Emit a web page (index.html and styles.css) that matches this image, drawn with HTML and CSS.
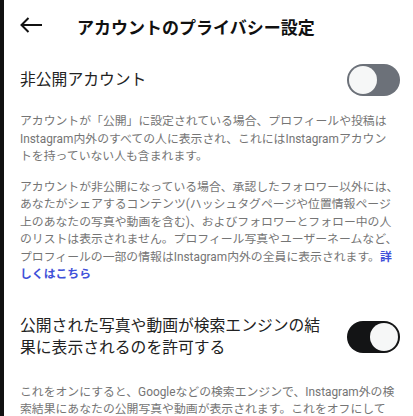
FILE: index.html
```html
<!DOCTYPE html>
<html>
  <head>
    <title>アカウントのプライバシー設定</title>
    <meta charset="utf-8">
    <link rel="stylesheet" href="styles.css">
  </head>
  <body>
    <div class="edge"></div>
    <div class="screen">
      <div class="top-bar">
        <svg class="back" width="22" height="16" viewBox="0 0 22 16">
          <path d="M8.5 1 L1.5 8 L8.5 15 M1.5 8 H22" fill="none" stroke="#111" stroke-width="2" />
        </svg>
        <h1 class="title">アカウントのプライバシー設定</h1>
      </div>

      <div class="setting-row">
        <span class="setting-label">非公開アカウント</span>
        <span class="switch"><span class="knob"></span></span>
      </div>
      <p class="note first">アカウントが「公開」に設定されている場合、プロフィールや投稿は<br>Instagram内外のすべての人に表示され、これにはInstagramアカウン<br>トを持っていない人も含まれます。</p>
      <p class="note">アカウントが非公開になっている場合、承認したフォロワー以外には、<br>あなたがシェアするコンテンツ(ハッシュタグページや位置情報ページ<br>上のあなたの写真や動画を含む)、およびフォロワーとフォロー中の人<br>のリストは表示されません。プロフィール写真やユーザーネームなど、<br>プロフィールの一部の情報はInstagram内外の全員に表示されます。<a class="more" href="#">詳<br>しくはこちら</a></p>

      <div class="setting-row tall">
        <span class="setting-label">公開された写真や動画が検索エンジンの結<br>果に表示されるのを許可する</span>
        <span class="switch on"><span class="knob"></span></span>
      </div>
      <p class="note last">これをオンにすると、Googleなどの検索エンジンで、Instagram外の検<br>索結果にあなたの公開写真や動画が表示されます。これをオフにして<br>も、公開コンテンツがInstagram外の検索結果に表示されます。</p>
    </div>
  </body>
</html>
```

FILE: styles.css
```css
body {
  margin: 0;
  background: #fff;
  font-family: Roboto, "Noto Sans CJK JP", sans-serif;
  color: #1c1c1c;
  display: flex;
  height: 416px;
  overflow: hidden;
}

.edge {
  width: 4px;
  flex-shrink: 0;
  background: #111;
}

.screen {
  flex: 1;
  min-width: 0;
  overflow: hidden;
  padding: 0 13px 0 16px;
}

.top-bar {
  height: 52px;
  display: flex;
  align-items: center;
}

.back {
  display: block;
  margin-top: -3px;
}

.title {
  margin: 0 0 0 35px;
  font-size: 17px;
  font-weight: 700;
  color: #111;
}

.setting-row {
  height: 56px;
  display: flex;
  align-items: center;
  justify-content: space-between;
}

.setting-row.tall {
  height: auto;
  margin-top: 31px;
}

.setting-label {
  font-size: 15.8px;
  line-height: 22px;
  color: #222;
}

.switch {
  width: 53px;
  height: 32px;
  border-radius: 16px;
  background: #6c7179;
  display: flex;
  align-items: center;
  padding: 0 2px;
  box-sizing: border-box;
  flex-shrink: 0;
}

.switch.on {
  background: #131415;
  justify-content: flex-end;
}

.knob {
  width: 28px;
  height: 28px;
  border-radius: 50%;
  background: #f6f7f7;
}

.note {
  margin: 13px 0 0;
  font-size: 11.85px;
  line-height: 17.5px;
  color: #757575;
  white-space: nowrap;
}

.note.first {
  margin-top: 5px;
}

.note.last {
  margin-top: 25px;
}

.more {
  color: #3f51d9;
  font-weight: 700;
  text-decoration: none;
}
```
